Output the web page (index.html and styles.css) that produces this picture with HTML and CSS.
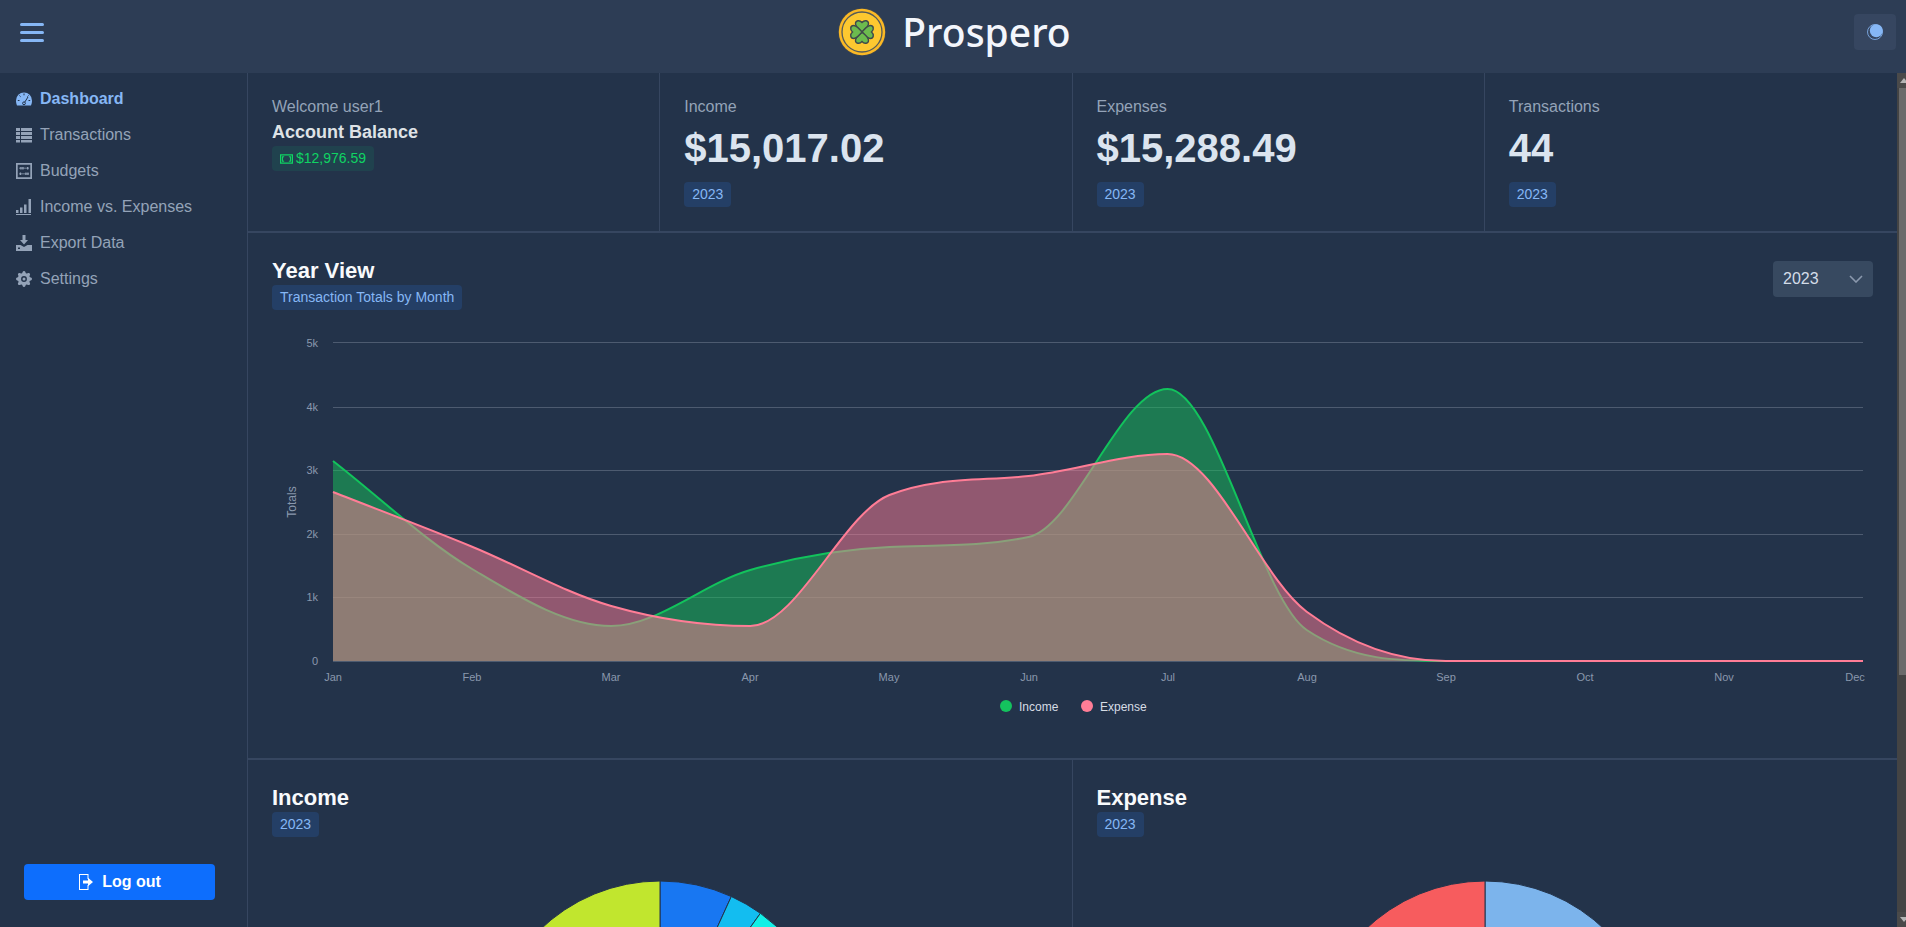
FILE: index.html
```html
<!DOCTYPE html>
<html lang="en">
  <head>
    <title>Prospero</title>
    <link rel="stylesheet" href="styles.css">
  </head>
  <body>
    <!-- Top bar -->
    <header class="topbar">
      <button class="menu-button" aria-label="Menu">
        <span class="menu-line"></span>
        <span class="menu-line"></span>
        <span class="menu-line"></span>
      </button>
      <div class="brand">
        <svg class="brand-logo" viewBox="0 0 48 48">
          <circle cx="24" cy="24" r="24" fill="#3d4650" />
          <circle cx="24" cy="24" r="23.2" fill="#fbb925" />
          <circle cx="24" cy="24" r="20" fill="#fdc830" stroke="#555a58" stroke-width="1.3" />
          <g class="clover">
            <path id="leaf" d="M24 24C21 21 17.5 19 17.5 15.5C17.5 12.5 21.5 11.5 24 14.5C26.5 11.5 30.5 12.5 30.5 15.5C30.5 19 27 21 24 24Z" />
            <use href="#leaf" transform="rotate(90 24 24)" />
            <use href="#leaf" transform="rotate(180 24 24)" />
            <use href="#leaf" transform="rotate(270 24 24)" />
          </g>
        </svg>
        <span class="brand-name">Prospero</span>
      </div>
      <button class="theme-button" aria-label="Theme">
        <svg class="theme-icon" viewBox="0 0 16 16">
          <circle cx="8" cy="8" r="7.5" fill="none" stroke="currentColor" stroke-width="0.8" />
          <circle cx="9.3" cy="6.7" r="6.5" fill="currentColor" />
        </svg>
      </button>
    </header>

    <div class="layout">
      <!-- Sidebar -->
      <aside class="sidebar">
        <nav class="nav">
          <a class="nav-link active">
            <svg class="nav-icon" viewBox="0 0 16 16">
              <path d="M0 9.500a8 8 0 0 1 16 0c0 2-.4 3.500-1 5H1c-.6-1.500-1-3-1-5z" />
              <path class="icon-cut" d="M8 2.500v1.800M3.400 4.500l1.200 1.200M12.600 4.500l-1.200 1.200M1.800 9.500h1.700M14.200 9.500h-1.700M12 6l-3.300 5.200" />
              <circle class="icon-cut" cx="8" cy="12.300" r="1.400" />
            </svg>
            Dashboard
          </a>
          <a class="nav-link">
            <svg class="nav-icon" viewBox="0 0 16 16">
              <path d="M0 1h4v3H0zM5 1h11v3H5zM0 5h4v3H0zM5 5h11v3H5zM0 9h4v3H0zM5 9h11v3H5zM0 13h4v2.500H0zM5 13h11v2.500H5z" />
            </svg>
            Transactions
          </a>
          <a class="nav-link">
            <svg class="nav-icon" viewBox="0 0 16 16">
              <path fill-rule="evenodd" d="M0 0h16v16H0zM1.700 1.700v12.600h12.600V1.700z" />
              <path d="M3 4.800h10v.8H3zM3 10.400h10v.8H3zM4.300 3.900h1.300v2.600H4.300zM6.300 3.900h1.300v2.600H6.300zM11 3.900h1.300v2.600H11zM3.800 9.500h1.300v2.600H3.800zM9.300 9.500h1.300v2.600H9.300zM11.300 9.500h1.300v2.600h-1.300z" />
            </svg>
            Budgets
          </a>
          <a class="nav-link">
            <svg class="nav-icon" viewBox="0 0 16 16">
              <path d="M0 11h2.500v3H0zM4 8.500h2.500V14H4zM8 5.500h2.500V14H8zM12.500 0H15v14h-2.500zM0 15h15v1H0z" />
            </svg>
            Income vs. Expenses
          </a>
          <a class="nav-link">
            <svg class="nav-icon" viewBox="0 0 16 16">
              <path d="M6.500 0h3v5H12l-4 4.500L4 5h2.500z" />
              <path d="M0 10h4.500L8 12l3.500-2H16v6H0zM2 12.500v1.500h2v-1.500z" />
            </svg>
            Export Data
          </a>
          <a class="nav-link">
            <svg class="nav-icon" viewBox="0 0 16 16">
              <path d="M9.405 1.050c-.413-1.400-2.397-1.400-2.810 0l-.100.340a1.464 1.464 0 0 1-2.105.872l-.310-.170c-1.283-.698-2.686.705-1.987 1.987l.169.311c.446.820.023 1.841-.872 2.105l-.340.100c-1.400.413-1.400 2.397 0 2.810l.340.100a1.464 1.464 0 0 1 .872 2.105l-.170.310c-.698 1.283.705 2.686 1.987 1.987l.311-.169a1.464 1.464 0 0 1 2.105.872l.100.340c.413 1.400 2.397 1.400 2.810 0l.100-.340a1.464 1.464 0 0 1 2.105-.872l.310.170c1.283.698 2.686-.705 1.987-1.987l-.169-.311a1.464 1.464 0 0 1 .872-2.105l.340-.100c1.400-.413 1.400-2.397 0-2.810l-.340-.100a1.464 1.464 0 0 1-.872-2.105l.170-.310c.698-1.283-.705-2.686-1.987-1.987l-.311.169a1.464 1.464 0 0 1-2.105-.872l-.100-.340zM8 10.930a2.929 2.929 0 1 1 0-5.860 2.929 2.929 0 0 1 0 5.858z" />
              <circle cx="8" cy="8" r="1.500" />
            </svg>
            Settings
          </a>
        </nav>
        <button class="logout-button">
          <svg class="logout-icon" viewBox="0 0 16 16">
            <path d="M1 0h9.500v5h-1V1H2v14h7.500v-4h1v5H1z" />
            <path d="M5 6.500h5V3.800L15 8l-5 4.200V9.500H5z" />
          </svg>
          Log out
        </button>
      </aside>

      <main class="content">
        <!-- Totals -->
        <section class="stats">
          <div class="stat">
            <p class="stat-label">Welcome user1</p>
            <p class="balance-title">Account Balance</p>
            <span class="badge badge-green">
              <svg class="money-icon" viewBox="0 0 14 10">
                <path fill-rule="evenodd" d="M0 0h14v10H0zM1.300 1.300v7.400h11.400V1.300z" />
                <path d="M2 2h2.800a3.500 3.500 0 0 0 0 6H2zM12 2H9.200a3.500 3.500 0 0 1 0 6H12z" />
              </svg>
              $12,976.59
            </span>
          </div>
          <div class="stat">
            <p class="stat-label">Income</p>
            <p class="stat-value">$15,017.02</p>
            <span class="badge">2023</span>
          </div>
          <div class="stat">
            <p class="stat-label">Expenses</p>
            <p class="stat-value">$15,288.49</p>
            <span class="badge">2023</span>
          </div>
          <div class="stat">
            <p class="stat-label">Transactions</p>
            <p class="stat-value">44</p>
            <span class="badge">2023</span>
          </div>
        </section>

        <!-- Year chart -->
        <section class="year-view">
          <div class="year-head">
            <div class="panel-title">
              <h2>Year View</h2>
              <span class="badge">Transaction Totals by Month</span>
            </div>
            <div class="year-select">
              2023
              <svg class="chevron" viewBox="0 0 14 8">
                <path d="M1 1l6 6 6-6" />
              </svg>
            </div>
          </div>
          <svg class="year-chart" viewBox="272 320 1601 410">
            <g class="grid">
              <path d="M333 343.500H1863M333 408.500H1863M333 471.500H1863M333 535.500H1863M333 598.500H1863M333 662.500H1863" />
            </g>
            <g class="tick-labels">
              <text class="y-tick" x="318" y="348">5k</text>
              <text class="y-tick" x="318" y="412">4k</text>
              <text class="y-tick" x="318" y="475">3k</text>
              <text class="y-tick" x="318" y="539">2k</text>
              <text class="y-tick" x="318" y="602">1k</text>
              <text class="y-tick" x="318" y="666">0</text>
              <text class="x-tick" x="333" y="682">Jan</text>
              <text class="x-tick" x="472" y="682">Feb</text>
              <text class="x-tick" x="611" y="682">Mar</text>
              <text class="x-tick" x="750" y="682">Apr</text>
              <text class="x-tick" x="889" y="682">May</text>
              <text class="x-tick" x="1029" y="682">Jun</text>
              <text class="x-tick" x="1168" y="682">Jul</text>
              <text class="x-tick" x="1307" y="682">Aug</text>
              <text class="x-tick" x="1446" y="682">Sep</text>
              <text class="x-tick" x="1585" y="682">Oct</text>
              <text class="x-tick" x="1724" y="682">Nov</text>
              <text class="x-tick" x="1855" y="682">Dec</text>
            </g>
            <text class="axis-title" transform="translate(296 503) rotate(-90)">Totals</text>

            <path class="area income-area" d="M333 462C379.400 498 425.700 542.500 472.100 570C518.500 597.500 564.800 627 611.200 627C657.600 627 703.900 584.200 750.300 571C796.700 557.800 843 550 889.400 548C935.800 546 982.100 547.800 1028.500 538C1074.900 528.200 1121.200 390 1167.600 390C1214 390 1260.300 600 1306.700 631C1353.100 662 1399.400 662 1445.800 662L1863 662L333 662Z" />
            <path class="line income-line" d="M333 462C379.400 498 425.700 542.500 472.100 570C518.500 597.500 564.800 627 611.200 627C657.600 627 703.900 584.200 750.300 571C796.700 557.800 843 550 889.400 548C935.800 546 982.100 547.800 1028.500 538C1074.900 528.200 1121.200 390 1167.600 390C1214 390 1260.300 600 1306.700 631C1353.100 662 1399.400 662 1445.800 662L1863 662" />
            <path class="area expense-area" d="M333 493C379.400 511.200 425.700 528.700 472.100 547.700C518.500 566.700 564.800 593.800 611.200 607C657.600 620.200 703.900 627 750.300 627C796.700 627 843 514.400 889.400 496C935.800 477.600 982.100 482.100 1028.500 477C1074.900 471.900 1121.200 455 1167.600 455C1214 455 1260.300 578.200 1306.700 612.700C1353.100 647.200 1399.400 662 1445.800 662L1863 662L333 662Z" />
            <path class="line expense-line" d="M333 493C379.400 511.200 425.700 528.700 472.100 547.700C518.500 566.700 564.800 593.800 611.200 607C657.600 620.200 703.900 627 750.300 627C796.700 627 843 514.400 889.400 496C935.800 477.600 982.100 482.100 1028.500 477C1074.900 471.900 1121.200 455 1167.600 455C1214 455 1260.300 578.200 1306.700 612.700C1353.100 647.200 1399.400 662 1445.800 662L1863 662" />

            <circle class="income-dot" cx="1006" cy="707" r="6" />
            <text class="legend-label" x="1019" y="712">Income</text>
            <circle class="expense-dot" cx="1087" cy="707" r="6" />
            <text class="legend-label" x="1100" y="712">Expense</text>
          </svg>
        </section>

        <!-- Pies -->
        <section class="pies">
          <div class="pie-panel">
            <div class="panel-title">
              <h2>Income</h2>
              <span class="badge">2023</span>
            </div>
            <svg class="pie" viewBox="0 0 344 344">
              <path class="slice" fill="#1877f2" d="M172 172V0A172 172 0 0 1 243.300 15.500Z" />
              <path class="slice" fill="#13bdf0" d="M172 172L243.300 15.500A172 172 0 0 1 272.400 32.300Z" />
              <path class="slice" fill="#12f0e6" d="M172 172L272.400 32.300A172 172 0 0 1 344 172Z" />
              <path class="slice" fill="#17c964" d="M172 172H344A172 172 0 0 1 172 344Z" />
              <path class="slice" fill="#f7a928" d="M172 172V344A172 172 0 0 1 0 172Z" />
              <path class="slice" fill="#c1e62e" d="M172 172H0A172 172 0 0 1 172 0Z" />
            </svg>
          </div>
          <div class="pie-panel">
            <div class="panel-title">
              <h2>Expense</h2>
              <span class="badge">2023</span>
            </div>
            <svg class="pie" viewBox="0 0 344 344">
              <path class="slice" fill="#7cb4ec" d="M172 172V0A172 172 0 0 1 344 172Z" />
              <path class="slice" fill="#a78bfa" d="M172 172H344A172 172 0 0 1 172 344Z" />
              <path class="slice" fill="#f7a928" d="M172 172V344A172 172 0 0 1 0 172Z" />
              <path class="slice" fill="#f75c5e" d="M172 172H0A172 172 0 0 1 172 0Z" />
            </svg>
          </div>
        </section>
      </main>

      <!-- Scrollbar of the main area -->
      <div class="scrollbar">
        <div class="scroll-cap">
          <span class="scroll-arrow-up"></span>
        </div>
        <div class="scroll-thumb"></div>
        <div class="scroll-cap scroll-cap-end">
          <span class="scroll-arrow-down"></span>
        </div>
      </div>
    </div>
  </body>
</html>
```

FILE: styles.css
```css
body {
  margin: 0;
  height: 100vh;
  display: flex;
  flex-direction: column;
  overflow: hidden;
  background-color: #23334a;
  color: #dee2e6;
  font-family: "Liberation Sans", Arial, sans-serif;
  font-size: 16px;
}
p,
h2 {
  margin: 0;
}
button {
  font-family: inherit;
  border: none;
  cursor: pointer;
}

/* Top bar */
.topbar {
  flex: none;
  height: 73px;
  display: grid;
  grid-template-columns: 1fr auto 1fr;
  align-items: center;
  padding: 0 10px;
  box-sizing: border-box;
  background-color: #2d3d55;
}
.menu-button {
  justify-self: start;
  margin: -9px 0 0 10px;
  width: 24px;
  padding: 0;
  display: flex;
  flex-direction: column;
  gap: 5px;
  background: transparent;
}
.menu-line {
  height: 3px;
  border-radius: 2px;
  background-color: #86b7f5;
}
.brand {
  display: flex;
  align-items: center;
  gap: 16px;
  margin-top: -10px;
  padding-left: 3px;
}
.brand-logo {
  width: 48px;
  height: 48px;
}
.clover {
  fill: #6cbb4e;
  stroke: #3f4a4a;
  stroke-width: 1.4;
}
.brand-name {
  font-family: "Noto Sans", sans-serif;
  font-size: 39px;
  font-weight: 500;
  color: #f3f6fc;
}
.theme-button {
  justify-self: end;
  width: 42px;
  height: 36px;
  margin-top: -9px;
  padding: 0;
  border-radius: 4px;
  background-color: #364660;
  color: #86b7f5;
}
.theme-icon {
  display: block;
  width: 16px;
  height: 16px;
  margin: auto;
}

.layout {
  flex: 1;
  min-height: 0;
  display: flex;
}

/* Sidebar */
.sidebar {
  flex: none;
  width: 247px;
  display: flex;
  flex-direction: column;
  justify-content: space-between;
  padding: 8px 0 27px;
  box-sizing: content-box;
  border-right: 1px solid #364660;
}
.nav {
  display: flex;
  flex-direction: column;
}
.nav-link {
  height: 36px;
  display: flex;
  align-items: center;
  gap: 8px;
  padding-left: 16px;
  color: #94a3b8;
}
.nav-link.active {
  font-weight: bold;
  color: #86b7f5;
}
.nav-icon {
  width: 16px;
  height: 16px;
  fill: currentColor;
}
.icon-cut {
  fill: none;
  stroke: #23334a;
  stroke-width: 1;
}
.logout-button {
  align-self: flex-start;
  margin-left: 24px;
  width: 191px;
  height: 36px;
  display: flex;
  align-items: center;
  justify-content: center;
  gap: 8px;
  border-radius: 4px;
  background-color: #0d6efd;
  color: white;
  font-size: 16px;
  font-weight: bold;
}
.logout-icon {
  width: 16px;
  height: 16px;
  fill: white;
}

/* Main area */
.content {
  flex: 1;
  min-width: 0;
  overflow: hidden;
}
.scrollbar {
  flex: none;
  width: 9px;
  display: flex;
  flex-direction: column;
  overflow: hidden;
  background-color: #444444;
}
.scroll-cap {
  flex: none;
  height: 15px;
  display: flex;
  align-items: center;
  padding-left: 3px;
  background-color: #4a4a4a;
}
.scroll-cap-end {
  margin-top: auto;
}
.scroll-arrow-up,
.scroll-arrow-down {
  flex: none;
  border-left: 4px solid transparent;
  border-right: 4px solid transparent;
}
.scroll-arrow-up {
  border-bottom: 5px solid #b5b5b5;
}
.scroll-arrow-down {
  border-top: 5px solid #b5b5b5;
}
.scroll-thumb {
  flex: none;
  height: 587px;
  margin-left: 2px;
  background-color: #6b6b6b;
}

.badge {
  display: inline-block;
  padding: 0 8px;
  line-height: 25px;
  border-radius: 4px;
  background-color: #243f66;
  color: #86b7f5;
  font-size: 14px;
}
.badge-green {
  display: inline-flex;
  align-items: center;
  gap: 3px;
  background-color: #20424e;
  color: #0fd463;
}
.money-icon {
  width: 13px;
  height: 10px;
  fill: currentColor;
}

/* Totals */
.stats {
  display: grid;
  grid-template-columns: repeat(4, 1fr);
  height: 160px;
  box-sizing: border-box;
  border-bottom: 2px solid #364660;
}
.stat {
  padding: 24px;
  border-right: 1px solid #364660;
}
.stat:last-child {
  border-right: none;
}
.stat-label {
  line-height: 19px;
  color: #94a3b8;
}
.balance-title {
  margin: 4px 0 1px;
  font-size: 18px;
  line-height: 25px;
  font-weight: bold;
  color: #dee2e6;
}
.stat-value {
  margin: 8px 0 10px;
  font-size: 40px;
  line-height: 48px;
  font-weight: bold;
  color: #dbe4ef;
}

/* Year chart */
.year-view {
  height: 527px;
  box-sizing: border-box;
  padding: 24px 24px 0;
  border-bottom: 2px solid #364660;
}
.year-head {
  display: flex;
  justify-content: space-between;
  align-items: flex-start;
}
.panel-title {
  display: flex;
  flex-direction: column;
  align-items: flex-start;
  gap: 1px;
}
.panel-title h2 {
  margin-top: 1px;
  font-size: 22px;
  line-height: 26px;
  color: #f8fafc;
}
.year-select {
  width: 100px;
  height: 36px;
  margin-top: 4px;
  display: flex;
  align-items: center;
  justify-content: space-between;
  padding: 0 10px;
  box-sizing: border-box;
  border-radius: 4px;
  background-color: #374960;
  color: #d3dce8;
}
.chevron {
  width: 14px;
  height: 8px;
  fill: none;
  stroke: #8a98ad;
  stroke-width: 1.600;
}
.year-chart {
  display: block;
  width: 1601px;
  height: 410px;
  margin-top: 9px;
}
.grid path {
  fill: none;
  stroke: #4d5b70;
  stroke-width: 1;
}
.tick-labels text {
  font-size: 11px;
  fill: #8a98ad;
}
.y-tick {
  text-anchor: end;
}
.x-tick {
  text-anchor: middle;
}
.axis-title {
  font-size: 12px;
  fill: #8a98ad;
  text-anchor: middle;
}
.line {
  fill: none;
  stroke-width: 2;
}
.income-area {
  fill: rgba(23, 193, 90, 0.5);
}
.income-line {
  stroke: #12c35c;
}
.expense-area {
  fill: rgba(255, 125, 150, 0.5);
}
.expense-line {
  stroke: #ff7d96;
}
.income-dot {
  fill: #14c25e;
}
.expense-dot {
  fill: #ff7d96;
}
.legend-label {
  font-size: 12px;
  fill: #d6dce5;
}

/* Pies */
.pies {
  display: grid;
  grid-template-columns: 1fr 1fr;
  height: 512px;
}
.pie-panel {
  padding: 24px;
  display: flex;
  flex-direction: column;
  box-sizing: border-box;
  border-right: 1px solid #364660;
}
.pie-panel:last-child {
  border-right: none;
}
.pie {
  flex: none;
  align-self: center;
  width: 344px;
  height: 344px;
  margin-top: 44px;
}
.slice {
  stroke: #23334a;
  stroke-width: 1;
}
```
